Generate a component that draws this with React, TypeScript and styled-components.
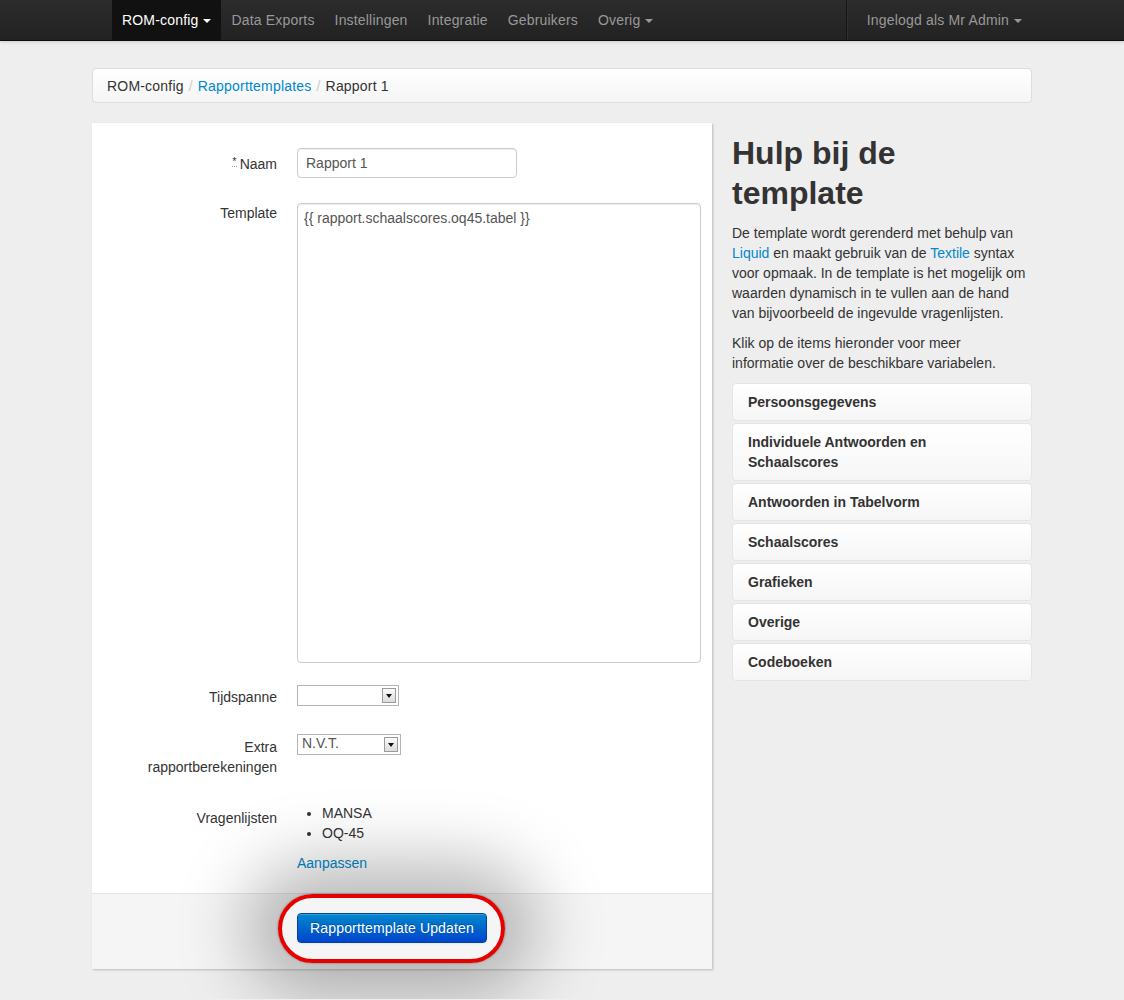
import React from "react";
import styled, { createGlobalStyle } from "styled-components";

const Global = createGlobalStyle`
  html, body { margin: 0; padding: 0; background: #eeeeee; }
  body {
    font-family: "Liberation Sans", Arial, Helvetica, sans-serif;
    font-size: 14px;
    line-height: 20px;
    color: #333333;
  }
  * { box-sizing: border-box; }
`;

const Navbar = styled.div`
  height: 41px;
  background: linear-gradient(#2c2c2c, #222222);
  border-bottom: 1px solid #0d0d0d;
  box-shadow: 0 1px 3px rgba(0, 0, 0, 0.15);
`;

const NavInner = styled.div`
  width: 940px;
  margin: 0 auto;
  display: flex;
  justify-content: space-between;
  height: 40px;
`;

const NavList = styled.ul`
  list-style: none;
  margin: 0;
  padding: 0 0 0 20px;
  display: flex;
  height: 40px;
`;

const NavItem = styled.li<{ $active?: boolean }>`
  display: flex;
  align-items: center;
  padding: 0 10px;
  height: 40px;
  letter-spacing: 0.18px;
  color: ${(p) => (p.$active ? "#ffffff" : "#999999")};
  background: ${(p) => (p.$active ? "#111111" : "transparent")};
  white-space: nowrap;
`;

const Caret = styled.span<{ $light?: boolean }>`
  display: inline-block;
  width: 0;
  height: 0;
  margin-left: 5px;
  margin-top: 1px;
  border-left: 4px solid transparent;
  border-right: 4px solid transparent;
  border-top: 4px solid ${(p) => (p.$light ? "#ffffff" : "#999999")};
`;

const Divider = styled.li`
  width: 2px;
  height: 40px;
  border-left: 1px solid #151515;
  border-right: 1px solid #2f2f2f;
  margin-right: 9px;
`;

const Page = styled.div`
  width: 940px;
  margin: 27px auto 0;
  padding-bottom: 30px;
`;

const Breadcrumb = styled.ul`
  list-style: none;
  margin: 0 0 20px;
  padding: 7px 14px 6px;
  height: 35px;
  display: flex;
  letter-spacing: 0.2px;
  background: linear-gradient(#ffffff, #f5f5f5);
  border: 1px solid #dddddd;
  border-radius: 4px;
  box-shadow: inset 0 1px 0 #ffffff;
`;

const Crumb = styled.li<{ $link?: boolean }>`
  color: ${(p) => (p.$link ? "#0088cc" : "#333333")};
`;

const Slash = styled.li`
  color: #cccccc;
  padding: 0 5px;
`;

const Columns = styled.div`
  display: grid;
  grid-template-columns: 620px 300px;
  column-gap: 20px;
  align-items: start;
`;

const FormPanel = styled.div`
  background: #ffffff;
  box-shadow: 1px 1px 2px rgba(0, 0, 0, 0.22);
`;

const FormBody = styled.div`
  padding: 25px 11px 20px 25px;
`;

const ControlGroup = styled.div<{ $mt: number }>`
  display: flex;
  margin-top: ${(p) => p.$mt}px;
`;

const Label = styled.div<{ $pt: number }>`
  width: 160px;
  margin-right: 20px;
  text-align: right;
  padding-top: ${(p) => p.$pt}px;
  flex-shrink: 0;
`;

const Abbr = styled.abbr`
  display: inline-block;
  font-size: 11px;
  line-height: 9px;
  vertical-align: 4px;
  text-decoration: none;
  border-bottom: 1px dotted #999999;
  margin-right: 3px;
`;

const Controls = styled.div`
  flex: 1;
`;

const TextInput = styled.input`
  display: block;
  width: 220px;
  height: 30px;
  padding: 4px 8px;
  border: 1px solid #cccccc;
  border-radius: 4px;
  box-shadow: inset 0 1px 1px rgba(0, 0, 0, 0.075);
  font-family: "Liberation Sans", Arial, sans-serif;
  font-size: 14px;
  line-height: 20px;
  color: #555555;
  margin: 0;
`;

const TextArea = styled.textarea`
  display: block;
  width: 404px;
  height: 460px;
  padding: 4px 6px;
  border: 1px solid #cccccc;
  border-radius: 4px;
  box-shadow: inset 0 1px 1px rgba(0, 0, 0, 0.075);
  font-family: "Liberation Sans", Arial, sans-serif;
  font-size: 14px;
  line-height: 20px;
  color: #555555;
  resize: none;
  margin: 0;
`;

const SelectBox = styled.div<{ $w: number }>`
  width: ${(p) => p.$w}px;
  height: 21px;
  border: 1px solid #b4b4b4;
  background: #ffffff;
  display: flex;
  align-items: center;
  justify-content: space-between;
  padding: 0 2px 0 4px;
  color: #555555;
  font-size: 14px;
  line-height: 17px;
`;

const SelectText = styled.span`
  margin-top: -3px;
`;

const SelectArrow = styled.span`
  width: 14px;
  height: 15px;
  border: 1px solid #9a9a9a;
  background: linear-gradient(#fbfbfb, #dcdcdc);
  display: flex;
  align-items: center;
  justify-content: center;
  &::after {
    content: "";
    width: 0;
    height: 0;
    border-left: 3px solid transparent;
    border-right: 3px solid transparent;
    border-top: 4px solid #111111;
  }
`;

const List = styled.ul`
  margin: 0 0 10px 25px;
  padding: 0;
  li { line-height: 20px; }
`;

const Link = styled.a`
  color: #0088cc;
  text-decoration: none;
`;

const FormActions = styled.div`
  background: #f5f5f5;
  border-top: 1px solid #e5e5e5;
  padding: 19px 20px 26px 205px;
`;

const ButtonWrap = styled.div`
  position: relative;
  display: inline-block;
`;

const Spotlight = styled.span`
  position: absolute;
  left: -19px;
  top: -19px;
  right: -18px;
  bottom: -20px;
  border: 4px solid #e60000;
  border-radius: 36px;
  box-shadow: 0 0 70px 32px rgba(0, 0, 0, 0.28), 0 0 2px rgba(0, 0, 0, 0.5);
  pointer-events: none;
`;

const PrimaryButton = styled.button`
  position: relative;
  z-index: 1;
  display: block;
  width: 190px;
  height: 30px;
  padding: 4px 12px;
  font-family: "Liberation Sans", Arial, sans-serif;
  font-size: 14px;
  line-height: 20px;
  letter-spacing: 0.15px;
  color: #ffffff;
  text-shadow: 0 -1px 0 rgba(0, 0, 0, 0.25);
  background: linear-gradient(#0088cc, #0044cc);
  border: 1px solid #0044aa;
  border-radius: 4px;
  box-shadow: inset 0 1px 0 rgba(255, 255, 255, 0.2), 0 1px 2px rgba(0, 0, 0, 0.05);
`;

const Sidebar = styled.div``;

const Heading = styled.h1`
  font-size: 32px;
  line-height: 40px;
  font-weight: bold;
  margin: 10px 0 10px;
  color: #333333;
`;

const Para = styled.p<{ $maxWidth?: number }>`
  margin: 0 0 10px;
  max-width: ${(p) => (p.$maxWidth ? `${p.$maxWidth}px` : "none")};
`;

const Accordion = styled.div`
  display: flex;
  flex-direction: column;
  gap: 2px;
`;

const AccordionItem = styled.div`
  border: 1px solid #e5e5e5;
  border-radius: 4px;
  background: linear-gradient(#ffffff, #f6f6f6);
  padding: 8px 15px;
  font-weight: bold;
  color: #333333;
`;

const navItems = ["Data Exports", "Instellingen", "Integratie", "Gebruikers"];
const accordion = [
  "Persoonsgegevens",
  "Individuele Antwoorden en Schaalscores",
  "Antwoorden in Tabelvorm",
  "Schaalscores",
  "Grafieken",
  "Overige",
  "Codeboeken",
];

export default function App() {
  return (
    <>
      <Global />
      <Navbar>
        <NavInner>
          <NavList>
            <NavItem $active>
              ROM-config <Caret $light />
            </NavItem>
            {navItems.map((n) => (
              <NavItem key={n}>{n}</NavItem>
            ))}
            <NavItem>
              Overig <Caret />
            </NavItem>
          </NavList>
          <NavList>
            <Divider />
            <NavItem>
              Ingelogd als Mr Admin <Caret />
            </NavItem>
          </NavList>
        </NavInner>
      </Navbar>
      <Page>
        <Breadcrumb>
          <Crumb>ROM-config</Crumb>
          <Slash>/</Slash>
          <Crumb $link>Rapporttemplates</Crumb>
          <Slash>/</Slash>
          <Crumb>Rapport 1</Crumb>
        </Breadcrumb>
        <Columns>
          <FormPanel>
            <FormBody>
              <ControlGroup $mt={0}>
                <Label $pt={6}>
                  <Abbr title="verplicht">*</Abbr>Naam
                </Label>
                <Controls>
                  <TextInput defaultValue="Rapport 1" />
                </Controls>
              </ControlGroup>
              <ControlGroup $mt={25}>
                <Label $pt={0}>Template</Label>
                <Controls>
                  <TextArea defaultValue="{{ rapport.schaalscores.oq45.tabel }}" />
                </Controls>
              </ControlGroup>
              <ControlGroup $mt={22}>
                <Label $pt={2}>Tijdspanne</Label>
                <Controls>
                  <SelectBox $w={102}>
                    <SelectText></SelectText>
                    <SelectArrow />
                  </SelectBox>
                </Controls>
              </ControlGroup>
              <ControlGroup $mt={27}>
                <Label $pt={3}>Extra rapportberekeningen</Label>
                <Controls>
                  <SelectBox $w={104}>
                    <SelectText>N.V.T.</SelectText>
                    <SelectArrow />
                  </SelectBox>
                </Controls>
              </ControlGroup>
              <ControlGroup $mt={26}>
                <Label $pt={5}>Vragenlijsten</Label>
                <Controls>
                  <List>
                    <li>MANSA</li>
                    <li>OQ-45</li>
                  </List>
                  <Link href="#">Aanpassen</Link>
                </Controls>
              </ControlGroup>
            </FormBody>
            <FormActions>
              <ButtonWrap>
                <Spotlight />
                <PrimaryButton>Rapporttemplate Updaten</PrimaryButton>
              </ButtonWrap>
            </FormActions>
          </FormPanel>
          <Sidebar>
            <Heading>Hulp bij de template</Heading>
            <Para>
              De template wordt gerenderd met behulp van <Link href="#">Liquid</Link> en maakt
              gebruik van de <Link href="#">Textile</Link> syntax voor opmaak. In de template is
              het mogelijk om waarden dynamisch in te vullen aan de hand van bijvoorbeeld de
              ingevulde vragenlijsten.
            </Para>
            <Para $maxWidth={286}>
              Klik op de items hieronder voor meer informatie over de beschikbare variabelen.
            </Para>
            <Accordion>
              {accordion.map((a) => (
                <AccordionItem key={a}>{a}</AccordionItem>
              ))}
            </Accordion>
          </Sidebar>
        </Columns>
      </Page>
    </>
  );
}
